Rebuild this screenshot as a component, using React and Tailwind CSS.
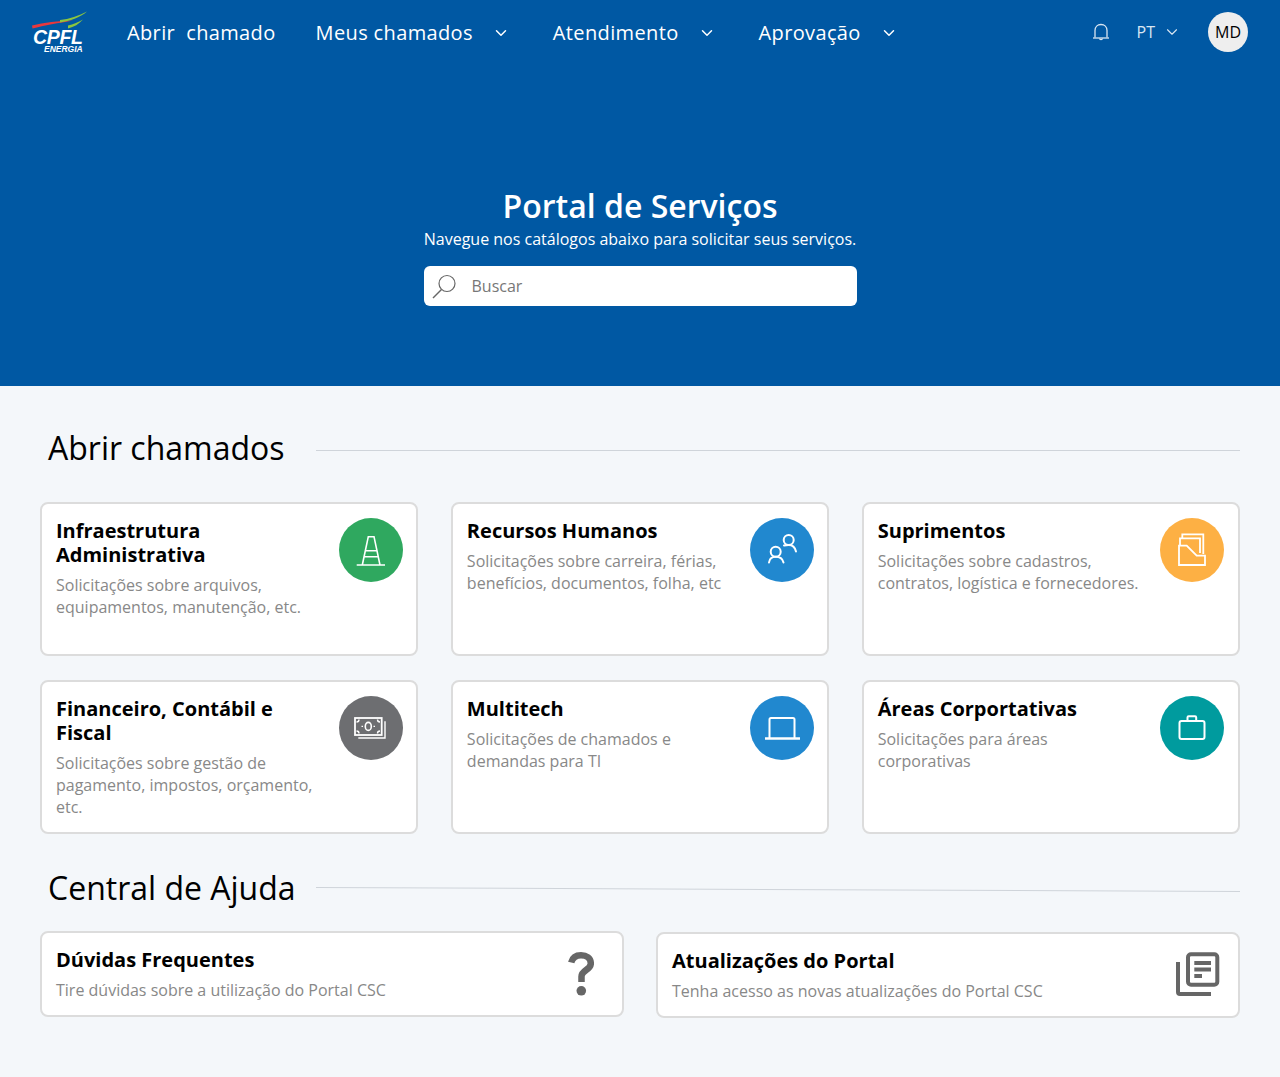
import React from "react";
import { ChevronDown } from "lucide-react";

const Logo = () => (
  <div className="flex w-[56px] shrink-0 flex-col font-['Liberation_Sans',sans-serif] italic font-bold text-white">
    <svg width="56" height="19" viewBox="0 0 56 19">
      <path d="M0 14.5 C12 11.5 26 10 41 9.5 C27 12 12 14.5 0.5 17.5 Z" fill="#e8383d" />
      <path d="M28 9 C37 8 47 5 55 0.5 C48 6.5 38 10 28 11.5 Z" fill="#8cc63f" />
      <path d="M36 14.5 C41 13.5 47 11 51 8.5 C47 13 42 16 36 17.5 Z" fill="#8cc63f" />
    </svg>
    <span className="pl-px text-[19.5px] leading-[14px] tracking-[-0.3px]">CPFL</span>
    <span className="mt-px pl-3 text-[8.5px] leading-[8px]">ENERGIA</span>
  </div>
);

const NavItem = ({ label }) => (
  <div className="flex items-center">
    <span className="text-[20px] font-medium tracking-[0.36px] text-white">{label}</span>
    <ChevronDown className="ml-[19px] text-white" size={18} strokeWidth={2} />
  </div>
);

const Cone = () => (
  <svg width="64" height="64" viewBox="0 0 64 64" fill="none" stroke="#fff" strokeWidth="1.6">
    <path d="M17.7 47H46M23.3 47L29.3 18.7H35L41 47M26 32.7H38M25 38.7H39.5" />
  </svg>
);

const People = () => (
  <svg width="64" height="64" viewBox="0 0 64 64" fill="none" stroke="#fff" strokeWidth="2">
    <circle cx="38.7" cy="22" r="5" />
    <circle cx="25.7" cy="33.7" r="5" />
    <path d="M19 44.5C19.5 40.5 22.5 38.8 25.7 38.8C29 38.8 32.5 40.5 33.5 44.5" strokeLinecap="round" />
    <path d="M34 27.5C35.5 27 37 27 38.7 27C42.5 27 45 29 46 33.5" strokeLinecap="round" />
  </svg>
);

const Folder = () => (
  <svg width="64" height="64" viewBox="0 0 64 64" fill="none" stroke="#fff" strokeWidth="1.8">
    <path d="M22.3 20V16.3H43.3V36" />
    <path d="M20 27.5V20.3H40V35" />
    <path d="M19 27.7H26.7L36.7 37.7H45V47H19Z" />
  </svg>
);

const Money = () => (
  <svg width="64" height="64" viewBox="0 0 64 64" fill="none" stroke="#fff" strokeWidth="1.4">
    <rect x="16" y="22" width="26.7" height="17" strokeWidth="1.8" />
    <path d="M46 25.3V42H19.3" />
    <ellipse cx="29.3" cy="30.4" rx="3" ry="4" strokeWidth="1.6" />
    <path d="M22.5 30.4H24M34.5 30.4H36M17.5 26C19.5 26 20 25 20 23.5M41 26C39 26 38.5 25 38.5 23.5M17.5 35C19.5 35 20 36 20 37.5M41 35C39 35 38.5 36 38.5 37.5" />
  </svg>
);

const Laptop = () => (
  <svg width="64" height="64" viewBox="0 0 64 64" fill="none" stroke="#fff" strokeWidth="2">
    <path d="M19.5 42V23.5C19.5 22.6 20.1 22 21 22H43C43.9 22 44.5 22.6 44.5 23.5V42" />
    <path d="M15 42.5H50" strokeWidth="2.6" />
  </svg>
);

const Briefcase = () => (
  <svg width="64" height="64" viewBox="0 0 64 64" fill="none" stroke="#fff" strokeWidth="2">
    <rect x="19.5" y="25" width="25" height="18" rx="2" />
    <path d="M27.5 25V21.5C27.5 20.8 28 20.3 28.7 20.3H35C35.7 20.3 36.2 20.8 36.2 21.5V25" />
  </svg>
);

const Question = () => (
  <svg width="26" height="44" viewBox="0 0 26 44" fill="none" stroke="#666" strokeWidth="6.5">
    <path d="M3.2 10.5C4.5 5.5 8 3.3 13 3.3C18.5 3.3 22.8 6 22.8 11.5C22.8 18 13.5 18 13.5 24.5V30" />
    <circle cx="13.3" cy="38.8" r="4.8" fill="#666" stroke="none" />
  </svg>
);

const News = () => (
  <svg width="46" height="46" viewBox="0 0 46 46" fill="none" stroke="#666">
    <rect x="13" y="2.2" width="29.3" height="30.6" rx="3" strokeWidth="4" />
    <path d="M3 10V40C3 41.3 3.8 42 5 42H36" strokeWidth="4" />
    <path d="M19.3 11H36M19.3 17.5H36M19.3 24H27" strokeWidth="4" />
  </svg>
);

const cards = [
  { title: "Infraestrutura Administrativa", desc: "Solicitações sobre arquivos, equipamentos, manutenção, etc.", color: "bg-[#2fa85f]", icon: <Cone /> },
  { title: "Recursos Humanos", desc: "Solicitações sobre carreira, férias, benefícios, documentos, folha, etc", color: "bg-[#2188cf]", icon: <People /> },
  { title: "Suprimentos", desc: "Solicitações sobre cadastros, contratos, logística e fornecedores.", color: "bg-[#fdb044]", icon: <Folder /> },
  { title: "Financeiro, Contábil e Fiscal", desc: "Solicitações sobre gestão de pagamento, impostos, orçamento, etc.", color: "bg-[#6d6e71]", icon: <Money /> },
  { title: "Multitech", desc: "Solicitações de chamados e demandas para TI", color: "bg-[#2188cf]", icon: <Laptop /> },
  { title: "Áreas Corportativas", desc: "Solicitações para áreas corporativas", color: "bg-[#009b9e]", icon: <Briefcase />, narrow: true },
];

const Heading = ({ children, lineClass }) => (
  <div className="flex items-center pl-2">
    <h2 className="w-[268px] text-[32px] leading-[40px] text-black whitespace-nowrap">{children}</h2>
    <div className={"h-px flex-1 bg-[#cfd4da] " + lineClass}></div>
  </div>
);

const App = () => {
  return (
    <div className="min-h-[1077px] bg-[#f4f7fa] font-['Open_Sans',sans-serif]">
      {/* topo */}
      <div className="h-[386px] bg-[#0058a3]">
        <div className="flex h-16 items-center pl-8 pr-8">
          <Logo />
          <div className="ml-[39px] flex items-center gap-[43px] pt-px">
            <span className="-mr-[3px] text-[20px] font-medium tracking-[0.36px] text-white whitespace-pre">Abrir  chamado</span>
            <NavItem label="Meus chamados" />
            <NavItem label="Atendimento" />
            <NavItem label="Aprovação" />
          </div>
          <div className="ml-auto flex items-center">
            <svg width="20" height="20" viewBox="0 0 20 20" fill="none" stroke="#d9e6f2" strokeWidth="1.3">
              <path d="M4 15.5V8.5C4 4.8 6.5 2.5 10 2.5C13.5 2.5 16 4.8 16 8.5V15.5" />
              <path d="M2 16H18" />
              <path d="M8.5 16.5C8.7 18 11.3 18 11.5 16.5" />
            </svg>
            <span className="ml-[26px] text-[16px] text-[#d9e6f2]">PT</span>
            <ChevronDown className="ml-[8px] text-[#d9e6f2]" size={18} strokeWidth={1.5} />
            <div className="ml-[27px] flex h-10 w-10 items-center justify-center rounded-full bg-[#eeeeee] text-[16px] font-medium text-black">
              MD
            </div>
          </div>
        </div>
        <div className="flex flex-col items-center pt-[122px]">
          <h1 className="text-[32px] leading-[40px] font-semibold text-white">Portal de Serviços</h1>
          <p className="mt-[2px] text-[16px] leading-[22px] text-white">
            Navegue nos catálogos abaixo para solicitar seus serviços.
          </p>
          <div className="mt-4 flex h-10 w-[433px] items-center rounded-md bg-white pl-2">
            <svg width="26" height="26" viewBox="0 0 26 26" fill="none" stroke="#666" strokeWidth="1.2">
              <circle cx="15" cy="10.5" r="8" />
              <path d="M9.5 16.5L1 25" strokeWidth="1.5" />
            </svg>
            <span className="ml-[14px] text-[16px] text-[#777]">Buscar</span>
          </div>
        </div>
      </div>

      <div className="px-10 pt-[42px]">
        <Heading lineClass="mt-[5px]">Abrir chamados</Heading>
        <div className="mt-[34px] grid grid-cols-3 gap-x-[32.6px] gap-y-6">
          {cards.map((c) => (
            <div key={c.title} className="flex h-[154px] justify-between rounded-lg border-2 border-[#dcdcdc] bg-white pt-[15px] pl-[14px] pr-[13.6px]">
              <div className={c.narrow ? "w-[200px]" : "w-[264px]"}>
                <h3 className="text-[20px] leading-[24px] font-bold text-black">{c.title}</h3>
                <p className="mt-[7px] text-[16px] leading-[22px] text-[#888]">{c.desc}</p>
              </div>
              <div className={"-mt-px flex h-16 w-16 shrink-0 items-center justify-center rounded-full " + c.color}>
                {c.icon}
              </div>
            </div>
          ))}
        </div>

        <div className="mt-[34px]">
          <Heading lineClass="mt-[2px] rotate-[0.25deg]">Central de Ajuda</Heading>
        </div>
        <div className="mt-[23px] grid grid-cols-2 items-start gap-x-8">
          <div className="flex h-[86px] items-center justify-between rounded-lg border-2 border-[#dcdcdc] bg-white pl-[14px] pr-[28px]">
            <div>
              <h3 className="text-[20px] leading-[24px] font-bold text-black">Dúvidas Frequentes</h3>
              <p className="mt-[7px] text-[16px] leading-[22px] text-[#888]">Tire dúvidas sobre a utilização do Portal CSC</p>
            </div>
            <Question />
          </div>
          <div className="mt-px flex h-[86px] items-center justify-between rounded-lg border-2 border-[#dcdcdc] bg-white pl-[14px] pr-[17px]">
            <div>
              <h3 className="text-[20px] leading-[24px] font-bold text-black">Atualizações do Portal</h3>
              <p className="mt-[7px] text-[16px] leading-[22px] text-[#888]">Tenha acesso as novas atualizações do Portal CSC</p>
            </div>
            <News />
          </div>
        </div>
      </div>
    </div>
  );
};

export default App;
